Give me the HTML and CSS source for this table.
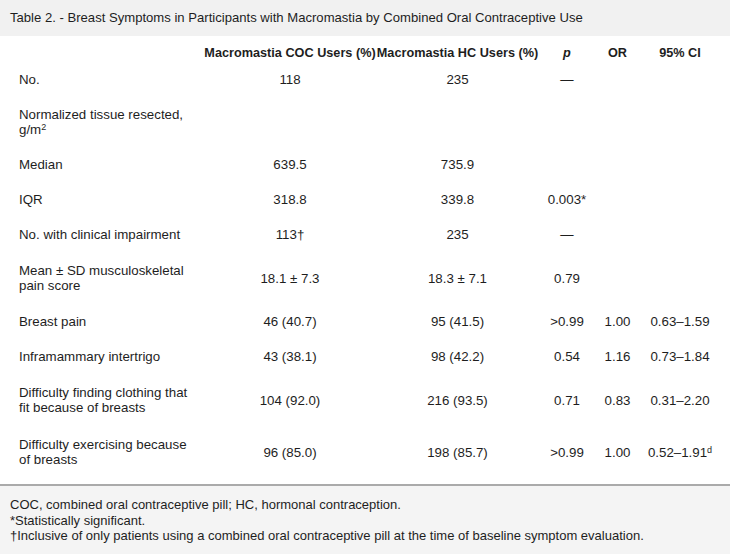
FILE: index.html
```html
<!DOCTYPE html>
<html>
<head>
<meta charset="utf-8">
<link rel="stylesheet" href="styles.css">
</head>
<body>
<div class="page">
  <div class="title">Table 2. - Breast Symptoms in Participants with Macromastia by Combined Oral Contraceptive Use</div>
  <table class="data">
    <colgroup>
      <col class="c1"><col class="c2"><col class="c3"><col class="c4"><col class="c5"><col class="c6">
    </colgroup>
    <thead>
      <tr>
        <th></th>
        <th>Macromastia COC Users (%)</th>
        <th>Macromastia HC Users (%)</th>
        <th><i>p</i></th>
        <th>OR</th>
        <th>95% CI</th>
      </tr>
    </thead>
    <tbody>
      <tr><td>No.</td><td>118</td><td>235</td><td>—</td><td></td><td></td></tr>
      <tr><td>Normalized tissue resected, g/m<sup>2</sup></td><td></td><td></td><td></td><td></td><td></td></tr>
      <tr><td>Median</td><td>639.5</td><td>735.9</td><td></td><td></td><td></td></tr>
      <tr><td>IQR</td><td>318.8</td><td>339.8</td><td>0.003*</td><td></td><td></td></tr>
      <tr><td>No. with clinical impairment</td><td>113†</td><td>235</td><td>—</td><td></td><td></td></tr>
      <tr class="two"><td>Mean ± SD musculoskeletal pain score</td><td>18.1 ± 7.3</td><td>18.3 ± 7.1</td><td>0.79</td><td></td><td></td></tr>
      <tr><td>Breast pain</td><td>46 (40.7)</td><td>95 (41.5)</td><td>&gt;0.99</td><td>1.00</td><td>0.63–1.59</td></tr>
      <tr><td>Inframammary intertrigo</td><td>43 (38.1)</td><td>98 (42.2)</td><td>0.54</td><td>1.16</td><td>0.73–1.84</td></tr>
      <tr class="two"><td>Difficulty finding clothing that fit because of breasts</td><td>104 (92.0)</td><td>216 (93.5)</td><td>0.71</td><td>0.83</td><td>0.31–2.20</td></tr>
      <tr class="two"><td>Difficulty exercising because of breasts</td><td>96 (85.0)</td><td>198 (85.7)</td><td>&gt;0.99</td><td>1.00</td><td>0.52–1.91<sup>d</sup></td></tr>
    </tbody>
  </table>
  <div class="foot">
    <div>COC, combined oral contraceptive pill; HC, hormonal contraception.</div>
    <div>*Statistically significant.</div>
    <div>†Inclusive of only patients using a combined oral contraceptive pill at the time of baseline symptom evaluation.</div>
  </div>
</div>
</body>
</html>
```
FILE: styles.css
```css
html, body {
  margin: 0;
  padding: 0;
  background: #ffffff;
}
.page {
  width: 730px;
  height: 554px;
  overflow: hidden;
  font-family: "Liberation Sans", Arial, sans-serif;
  font-size: 13.3px;
  color: #1e1e1e;
  display: flex;
  flex-direction: column;
}
.title {
  background: #f1f1f1;
  height: 36px;
  line-height: 36px;
  padding-left: 10px;
  font-size: 13.1px;
  white-space: nowrap;
}
.data {
  border-collapse: collapse;
  table-layout: fixed;
  width: 720px;
  margin-top: 7px;
}
.c1 { width: 204px; }
.c2 { width: 172px; }
.c3 { width: 163px; }
.c4 { width: 56px; }
.c5 { width: 45px; }
.c6 { width: 80px; }
.data th {
  font-weight: bold;
  font-size: 12.7px;
  text-align: center;
  padding: 3px 0 1px;
  line-height: 15px;
  white-space: nowrap;
}
.data td {
  text-align: center;
  padding: 10px 0;
  line-height: 15px;
  vertical-align: middle;
}
.data .two td {
  padding: 11px 0;
}
.data td:first-child {
  text-align: left;
  padding-left: 19px;
  padding-right: 15px;
}
.data sup {
  font-size: 9px;
  line-height: 0;
  vertical-align: 4px;
}
.foot {
  margin-top: auto;
  border-top: 2px solid #aaaaaa;
  background: #f4f4f4;
  height: 70px;
  padding: 11px 10px 0;
  box-sizing: border-box;
  font-size: 13px;
  line-height: 15.5px;
}
```
